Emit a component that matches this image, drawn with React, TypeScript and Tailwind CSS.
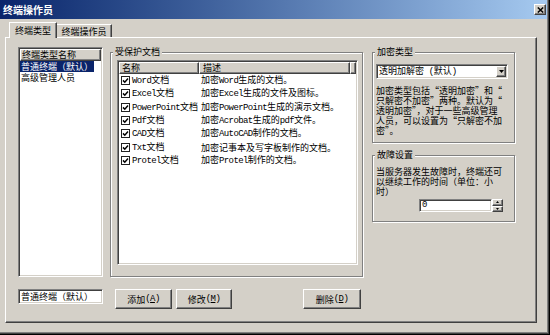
import React from "react";

const raised =
  "border-t border-l border-r border-b border-t-white border-l-white border-r-[#404040] border-b-[#404040] shadow-[inset_-1px_-1px_0_#808080]";
const sunken =
  "border-t border-l border-r border-b border-t-[#808080] border-l-[#808080] border-r-white border-b-white shadow-[inset_1px_1px_0_#404040,inset_-1px_-1px_0_#d4d0c8]";
const etched = "border border-[#808080] shadow-[inset_1px_1px_0_#fff,1px_1px_0_#fff]";
const cjk = "font-['Noto_Sans_CJK_SC',sans-serif]";
const mono = "font-['Liberation_Mono',monospace] text-[9px] tracking-[-0.6px]";

function Mix({ s }: { s: string }) {
  const parts = s.split(/([A-Za-z()0-9]+)/);
  return (
    <>
      {parts.map((p, i) =>
        /[A-Za-z()0-9]/.test(p) ? (
          <span key={i} className={mono}>
            {p}
          </span>
        ) : (
          <React.Fragment key={i}>{p}</React.Fragment>
        )
      )}
    </>
  );
}

function Group({
  label,
  className,
  children,
}: {
  label: string;
  className: string;
  children?: React.ReactNode;
}) {
  return (
    <div className={`relative ${etched} ${className}`}>
      <span className="absolute top-[-7px] left-[2px] px-[2px] bg-[#d4d0c8] text-[9px] leading-[11px] whitespace-nowrap">
        {label}
      </span>
      {children}
    </div>
  );
}

function Check() {
  return (
    <div className="w-[9px] h-[9px] border border-[#202020] bg-white flex items-center justify-center shrink-0">
      <svg width="7" height="7" viewBox="0 0 7 7">
        <path d="M1 3.4 L2.8 5.2 L6 1.6" stroke="#000" strokeWidth="1.5" fill="none" />
      </svg>
    </div>
  );
}

function Button({ text, acc, className }: { text: string; acc: string; className: string }) {
  return (
    <div
      className={`${raised} bg-[#d4d0c8] h-[20px] flex items-center justify-center text-[9px] leading-[11px] ${className}`}
    >
      <span>{text}</span>
      <span className={mono}>
        (<span className="underline">{acc}</span>)
      </span>
    </div>
  );
}

const docs: [string, string][] = [
  ["Word文档", "加密Word生成的文档。"],
  ["Excel文档", "加密Excel生成的文件及图标。"],
  ["PowerPoint文档", "加密PowerPoint生成的演示文档。"],
  ["Pdf文档", "加密Acrobat生成的pdf文件。"],
  ["CAD文档", "加密AutoCAD制作的文档。"],
  ["Txt文档", "加密记事本及写字板制作的文档。"],
  ["Protel文档", "加密Protel制作的文档。"],
];

export default function App() {
  return (
    <div
      className={`w-[550px] h-[335px] bg-[#d4d0c8] ${cjk} text-black text-[9px] flex flex-col overflow-hidden shadow-[inset_-1px_-1px_0_#000,inset_-2px_-2px_0_#404040,inset_-3px_-3px_0_#808080]`}
    >
      {/* Title bar */}
      <div className="h-[19px] w-[547px] bg-linear-to-r from-[#0a246a] to-[#a6caf0] flex items-center pl-[3px] pr-[1px] shrink-0">
        <span className="text-white font-bold text-[10px] leading-[12px]">终端操作员</span>
        <div className={`ml-auto w-[12px] h-[11px] ${raised} bg-[#d4d0c8] flex items-center justify-center`}>
          <svg width="7" height="6" viewBox="0 0 7 6">
            <path d="M0.8 0.5 L6.2 5.5 M6.2 0.5 L0.8 5.5" stroke="#000" strokeWidth="1.5" />
          </svg>
        </div>
      </div>

      <div className="pl-[5px]">
        {/* Tabs */}
        <div className="h-[18px] flex items-end pl-[4px]">
          <div className="relative z-10 -mb-px h-[16px] w-[48px] bg-[#d4d0c8] border-t border-l border-r border-t-white border-l-white border-r-[#404040] shadow-[inset_-1px_0_0_#808080] flex items-center justify-center text-[9px] leading-[11px]">
            终端类型
          </div>
          <div className="h-[13px] w-[55px] bg-[#d4d0c8] border-t border-r border-t-white border-r-[#404040] shadow-[inset_-1px_0_0_#808080] flex items-center justify-center text-[9px] leading-[11px]">
            终端操作员
          </div>
        </div>

        {/* Panel */}
        <div className="w-[532px] h-[286px] border-t border-l border-r border-b border-t-white border-l-white border-r-[#404040] border-b-[#404040] shadow-[inset_-1px_-1px_0_#808080] pl-[12px] pt-[9px] flex items-start">
          {/* Left column */}
          <div className="w-[85px] flex flex-col">
            <div className={`h-[230px] ${sunken} bg-white p-px flex flex-col`}>
              <div className={`h-[12px] ${raised} bg-[#d4d0c8] flex items-center pl-[1px] leading-[10px]`}>
                终端类型名称
              </div>
              <div className="h-[11px] flex items-center pl-[0px]">
                <span className="bg-[#0a246a] text-white px-[1px] leading-[11px]">普通终端（默认）</span>
              </div>
              <div className="h-[11px] flex items-center pl-[1px] leading-[11px]">高级管理人员</div>
            </div>
            <div className={`mt-[12px] h-[15px] ${sunken} bg-white flex items-center pl-[2px] leading-[11px]`}>
              普通终端（默认）
            </div>
          </div>

          {/* Middle column */}
          <div className="ml-[7px] w-[253px] flex flex-col">
            <Group label="受保护文档" className="mt-[5px] h-[225px] flex flex-col pt-[7px] pl-[6px] pr-[4px] pb-[11px]">
              <div className={`flex-1 ${sunken} bg-white p-px flex flex-col`}>
                <div className="h-[12px] flex">
                  <div className={`w-[80px] ${raised} bg-[#d4d0c8] flex items-center pl-[2px] leading-[10px]`}>名称</div>
                  <div className={`w-[151px] ${raised} bg-[#d4d0c8] flex items-center pl-[3px] leading-[10px]`}>描述</div>
                  <div className={`flex-1 ${raised} bg-[#d4d0c8]`} />
                </div>
                {docs.map(([n, d], i) => (
                  <div key={i} className="h-[13.3px] flex items-center leading-[11px] whitespace-nowrap">
                    <div className="w-[80px] flex items-center pl-[2px]">
                      <Check />
                      <span className="ml-[2px]">
                        <Mix s={n} />
                      </span>
                    </div>
                    <div className="pl-[2px]">
                      <Mix s={d} />
                    </div>
                  </div>
                ))}
              </div>
            </Group>
            <div className="mt-[12px] flex">
              <Button text="添加" acc="A" className="ml-[5px] w-[57px]" />
              <Button text="修改" acc="M" className="ml-[4px] w-[56px]" />
              <Button text="删除" acc="D" className="ml-[71px] w-[58px]" />
            </div>
          </div>

          {/* Right column */}
          <div className="ml-[9px] w-[143px] flex flex-col">
            <Group label="加密类型" className="mt-[5px] h-[91px] pl-[3px] pt-[11px]">
              <div className={`w-[132px] h-[15px] ${sunken} bg-white p-px flex items-center`}>
                <span className="pl-[1px] leading-[11px] whitespace-nowrap">
                  透明加解密<span className={mono}> (</span>默认<span className={mono}>)</span>
                </span>
                <div className={`ml-auto w-[10px] h-[11px] ${raised} bg-[#d4d0c8] flex items-center justify-center`}>
                  <svg width="5" height="3" viewBox="0 0 5 3">
                    <polygon points="0,0 5,0 2.5,3" fill="#000" />
                  </svg>
                </div>
              </div>
              <div className="mt-[7px] leading-[10px] whitespace-nowrap [font-feature-settings:'fwid']">
                加密类型包括“透明加密”和“
                <br />
                只解密不加密”两种。默认为“
                <br />
                透明加密”，对于一些高级管理
                <br />
                人员，可以设置为“只解密不加
                <br />
                密”。
              </div>
            </Group>
            <Group label="故障设置" className="mt-[12px] h-[67px] pl-[3px] pt-[11px]">
              <div className="leading-[10px] whitespace-nowrap">
                当服务器发生故障时，终端还可
                <br />
                以继续工作的时间（单位：小
                <br />
                时）
              </div>
              <div className="mt-[2px] ml-[43px] flex">
                <div className={`w-[73px] h-[13px] ${sunken} bg-white flex items-center pl-[2px]`}>
                  <span className={mono}>0</span>
                </div>
                <div className="w-[11px] h-[13px] flex flex-col">
                  <div className={`h-[6.5px] ${raised} bg-[#d4d0c8] flex items-center justify-center`}>
                    <svg width="3" height="2" viewBox="0 0 3 2">
                      <polygon points="1.5,0 3,2 0,2" fill="#000" />
                    </svg>
                  </div>
                  <div className={`h-[6.5px] ${raised} bg-[#d4d0c8] flex items-center justify-center`}>
                    <svg width="3" height="2" viewBox="0 0 3 2">
                      <polygon points="0,0 3,0 1.5,2" fill="#000" />
                    </svg>
                  </div>
                </div>
              </div>
            </Group>
          </div>
        </div>
      </div>
    </div>
  );
}
